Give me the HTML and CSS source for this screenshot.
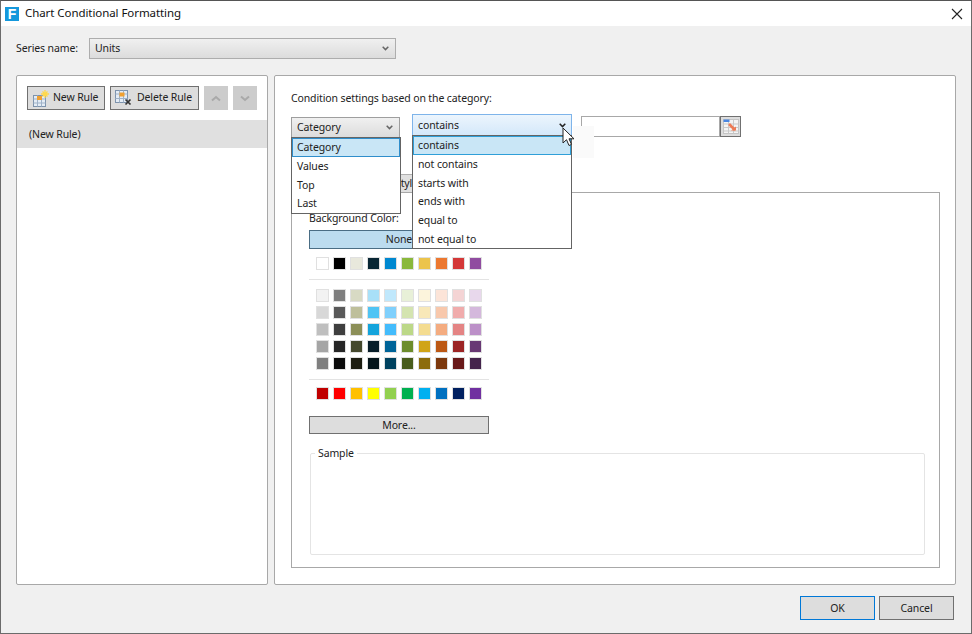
FILE: index.html
```html
<!DOCTYPE html>
<html lang="en">
<head>
<meta charset="utf-8">
<title>Chart Conditional Formatting</title>
<link rel="stylesheet" href="styles.css">
</head>
<body>
<div class="window">
  <header class="titlebar">
    <span class="app-logo">F</span>
    <span class="title">Chart Conditional Formatting</span>
    <svg class="close" width="12" height="12" viewBox="0 0 12 12"><path d="M1 1l10 10M11 1L1 11" stroke="#222" stroke-width="1.1" fill="none"/></svg>
  </header>
  <div class="series-row">
    <label class="series-label">Series name:</label>
    <div class="select series-select"><span>Units</span>
      <svg class="chev" width="7" height="5" viewBox="0 0 7 5"><path d="M0.700 0.800l2.800 2.800 2.800-2.800" stroke="#666" stroke-width="1.500" fill="none"/></svg>
    </div>
  </div>
  <main class="panels">
    <section class="panel rules">
      <div class="rule-toolbar">
        <button class="btn tool-btn">
          <svg width="19" height="20" viewBox="0 0 19 20"><rect x="2.500" y="7.500" width="12" height="11" fill="#e4ecf5" stroke="#7d93ad"/><path d="M2.500 11h12M2.500 15h12M6.500 7.500v11M10.500 7.500v11" stroke="#9fb2c8" fill="none"/><rect x="6" y="8" width="5" height="4" fill="#f0a030"/><path d="M14 2v8M10 6h8M11.500 3.500l5 5M16.500 3.500l-5 5" stroke="#ffd84a" stroke-width="1.300" fill="none"/></svg>
          <span>New Rule</span></button>
        <button class="btn tool-btn">
          <svg width="20" height="20" viewBox="0 0 20 20"><rect x="1.500" y="2.500" width="12" height="12" fill="#e4ecf5" stroke="#7d93ad"/><path d="M1.500 6h12M1.500 10.500h12M5.500 2.500v12M9.500 2.500v12" stroke="#9fb2c8" fill="none"/><rect x="5.500" y="4.500" width="5" height="4" fill="#f0a030"/><path d="M11.500 11.500l5 5M16.500 11.500l-5 5" stroke="#333" stroke-width="1.700" fill="none"/></svg>
          <span>Delete Rule</span></button>
        <button class="arrow-btn"><svg width="12" height="7" viewBox="0 0 12 7"><path d="M2 5.500l4-3.500 4 3.500" stroke="#a9a9a9" stroke-width="2" fill="none"/></svg></button>
        <button class="arrow-btn"><svg width="12" height="7" viewBox="0 0 12 7"><path d="M2 1.500l4 3.500 4-3.500" stroke="#a9a9a9" stroke-width="2" fill="none"/></svg></button>
      </div>
      <div class="rule-item">(New Rule)</div>
    </section>
    <section class="panel settings">
      <p class="cond-title">Condition settings based on the category:</p>
      <div class="cond-row">
        <div class="combo combo-first">
          <div class="select cat-select"><span>Category</span>
            <svg class="chev" width="7" height="5" viewBox="0 0 7 5"><path d="M0.700 0.800l2.800 2.800 2.800-2.800" stroke="#666" stroke-width="1.500" fill="none"/></svg>
          </div>
          <ul class="menu cat-menu">
            <li class="menu-item active">Category</li>
            <li class="menu-item">Values</li>
            <li class="menu-item">Top</li>
            <li class="menu-item">Last</li>
          </ul>
        </div>
        <div class="combo combo-second">
          <div class="select op-select"><span>contains</span>
            <svg class="chev" width="7" height="5" viewBox="0 0 7 5"><path d="M0.700 0.800l2.800 2.800 2.800-2.800" stroke="#222" stroke-width="1.500" fill="none"/></svg>
          </div>
          <ul class="menu op-menu">
            <li class="menu-item active">contains</li>
            <li class="menu-item">not contains</li>
            <li class="menu-item">starts with</li>
            <li class="menu-item">ends with</li>
            <li class="menu-item">equal to</li>
            <li class="menu-item">not equal to</li>
          </ul>
          <div class="cursor-shade"></div>
          <svg class="cursor" width="13" height="20" viewBox="0 0 13 20"><path d="M1 1v15l3.500-3.300 2.500 5.800 2.500-1.100-2.500-5.600h5z" fill="#fff" stroke="#222" stroke-width="1"/></svg>
        </div>
        <div class="value-field"><input class="value-input" type="text" aria-label="Value">
          <button class="pick-btn"><svg width="16" height="15" viewBox="0 0 16 15"><rect x="0.500" y="0.500" width="15" height="14" fill="#f4f4f4" stroke="#c4c4c4"/><path d="M0.500 5h15M0.500 8.500h15M0.500 12h15M5.500 0.500v14M10.500 0.500v14" stroke="#c9c9c9" fill="none"/><rect x="0.500" y="0.500" width="6" height="2.500" fill="#4a86e0"/><path d="M6 5l6 6" stroke="#ee7b55" stroke-width="2.600" fill="none"/><path d="M8 11.500h5v-4" fill="#ee7b55"/></svg></button>
        </div>
      </div>
      <div class="style-tab"><span class="tab-text">Style</span></div>
      <div class="style-box">
        <div class="bg-label">Background Color:</div>
        <button class="none-btn">None</button>
        <div class="palette" id="palette"></div>
        <button class="btn more-btn">More...</button>
        <fieldset class="sample"><legend class="sample-legend">Sample</legend></fieldset>
      </div>
    </section>
  </main>
  <footer class="actions">
    <button class="btn action-btn ok">OK</button>
    <button class="btn action-btn">Cancel</button>
  </footer>
</div>
<script src="palette.js"></script>
</body>
</html>
```

FILE: palette.js
```js
var groups = [
  [["#ffffff","#000000","#e8e8dc","#082634","#0088d0","#8ab83c","#ecc44c","#ec7830","#d43838","#904ca0"]],
  [["#f2f2f2","#7f7f7f","#d8dac4","#a8e0f8","#c0e8fc","#e8f0d8","#fcf4dc","#fce4d8","#f4d4d4","#e8d8ec"],
   ["#d8d8d8","#595959","#bebf9b","#50c4f4","#80d0fc","#d4e4b0","#f8e8b8","#f8c8ac","#f0acac","#d4b8dc"],
   ["#bfbfbf","#3f3f3f","#8c8f58","#14a4dc","#44bcfc","#bcd888","#f4dc90","#f4ac80","#e48484","#bc90c8"],
   ["#a5a5a5","#262626","#44482c","#061c28","#006498","#6c8c2c","#d0a418","#bc5814","#9c2424","#683874"],
   ["#7f7f7f","#0c0c0c","#1c1c10","#04141a","#00425f","#485c1c","#8c6c0c","#7c380c","#681818","#44244c"]],
  [["#c00000","#ff0000","#ffc000","#ffff00","#92d050","#00b050","#00b0f0","#0070c0","#002060","#7030a0"]]
];
var host = document.getElementById("palette");
groups.forEach(function (rows) {
  var g = document.createElement("div");
  g.className = "swatch-group";
  rows.forEach(function (row) {
    var r = document.createElement("div");
    r.className = "swatch-row";
    row.forEach(function (c) {
      var s = document.createElement("span");
      s.className = "swatch";
      s.style.backgroundColor = c;
      r.appendChild(s);
    });
    g.appendChild(r);
  });
  host.appendChild(g);
});
```

FILE: styles.css
```css
* { box-sizing: border-box; }
html, body { margin: 0; padding: 0; height: 100%; }
body {
  width: 972px;
  height: 634px;
  overflow: hidden;
  font-family: "Noto Sans", "Open Sans", sans-serif;
  font-size: 10.5px;
  letter-spacing: -0.12px;
  color: #222;
}
button { font: inherit; letter-spacing: inherit; color: inherit; padding: 0; cursor: default; }
ul { list-style: none; margin: 0; padding: 0; }
p { margin: 0; }

.window {
  width: 972px;
  height: 634px;
  background: #f0f0f0;
  border: 1px solid #6b6b6b;
  border-top-color: #555;
  display: flex;
  flex-direction: column;
}
.titlebar {
  height: 25px;
  background: #fff;
  display: flex;
  align-items: center;
  padding-left: 4px;
  flex: none;
}
.app-logo {
  width: 14px;
  height: 14px;
  background: #1498dc;
  color: #fff;
  font-family: "Liberation Sans", sans-serif;
  font-weight: 700;
  font-size: 14px;
  line-height: 14px;
  text-align: center;
  letter-spacing: 0;
}
.title { margin-left: 6px; margin-bottom: 2px; font-size: 11.5px; letter-spacing: -0.07px; color: #111; }
.close { margin-left: auto; margin-right: 8px; }

.series-row {
  height: 49px;
  padding: 12px 0 0 15px;
  display: flex;
  align-items: flex-start;
  flex: none;
}
.series-label { line-height: 20px; width: 73px; }
.select {
  display: flex;
  align-items: center;
  justify-content: space-between;
  background: linear-gradient(#f0f0f0, #dcdcdc);
  border: 1px solid #adadad;
}
.series-select span, .cat-select span { position: relative; top: -1px; }
.series-select { width: 307px; height: 21px; padding: 0 6px 0 5px; }

.panels {
  flex: none;
  height: 510px;
  display: flex;
  gap: 6px;
  padding-left: 15px;
}
.panel {
  background: #fff;
  border: 1px solid #a8a8a8;
  border-radius: 2px;
}
.rules { width: 252px; }
.settings { width: 682px; padding: 15px 16px 0; }

.rule-toolbar {
  display: flex;
  height: 44px;
  padding: 10px 0 0 10px;
}
.btn {
  background: #dddddd;
  border: 1px solid #707070;
}
.tool-btn {
  height: 24px;
  display: flex;
  align-items: center;
  gap: 3px;
  padding: 0 3px;
  margin-right: 5px;
  white-space: nowrap;
}
.tool-btn span { position: relative; top: -1px; }
.tool-btn:first-child { width: 78px; }
.tool-btn:nth-child(2) { width: 89px; }
.arrow-btn {
  width: 24px;
  height: 24px;
  margin-right: 5px;
  background: #cccccc;
  border: none;
  display: flex;
  align-items: center;
  justify-content: center;
}
.rule-item {
  height: 28px;
  line-height: 28px;
  background: #e0e0e0;
  padding-left: 12px;
}

.cond-title { line-height: 15px; height: 15px; }
.cond-row { display: flex; height: 60px; margin-top: 8px; align-items: flex-start; }
.combo { position: relative; }
.combo-first { width: 109px; margin-top: 3px; margin-right: 12px; }
.combo-second { width: 160px; margin-right: 9px; }
.cat-select { height: 21px; padding: 0 6px 0 5px; border-color: #9e9e9e; }
.op-select {
  height: 22px;
  padding: 0 5px;
  background: linear-gradient(#ecf5fd, #d4e8fa);
  border-color: #7eb4ea;
}
.menu {
  position: absolute;
  z-index: 5;
  background: #fff;
  border: 1px solid #646464;
  padding: 0;
}
.cat-menu { top: 20px; left: 0; width: 110px; height: 77px; }
.op-menu { top: 21px; left: 0; width: 160px; height: 114px; }
.menu-item { height: 18.700px; line-height: 18px; padding-left: 5px; }
.menu-item.active {
  background: #c9e6f6;
  border: 1px solid #2f8ecb;
  padding-left: 4px;
  height: 19px;
  line-height: 17px;
}
.op-menu .menu-item.active { border-color: #2f9fd8; }
.cursor {
  position: absolute;
  z-index: 7;
  left: 150px;
  top: 13px;
}
.cursor-shade {
  position: absolute;
  z-index: 6;
  left: 161px;
  top: 12px;
  width: 21px;
  height: 32px;
  background: #fafafa;
}
.value-field { display: flex; margin-top: 2px; }
.value-input {
  width: 139px;
  height: 21px;
  border: 1px solid #a8a8a8;
  background: #fff;
  padding: 0;
  outline: none;
}
.pick-btn {
  width: 21px;
  height: 21px;
  background: #dddddd;
  border: 1px solid #707070;
  display: flex;
  align-items: center;
  justify-content: center;
}

.style-tab {
  height: 18px;
  margin-left: 74px;
  width: 58px;
  background: #e0e0e0;
  border: 1px solid #b0b0b0;
  border-bottom: none;
  text-align: right;
  padding-right: 4px;
  line-height: 17px;
  color: #222;
}
.style-box {
  height: 376px;
  width: 649px;
  border: 1px solid #a8a8a8;
  padding: 14px 14px 0 17px;
}
.bg-label { line-height: 20px; height: 22px; margin-top: 1px; }
.none-btn {
  display: block;
  width: 180px;
  height: 19px;
  background: #bcdcef;
  border: 1px solid #4a6d84;
  text-align: center;
  line-height: 17px;
}
.palette { width: 180px; }
.swatch-group {
  padding: 8px 0 9px;
  border-bottom: 1px solid #e3e3e3;
}
.swatch-group:nth-child(2) { padding-top: 9px; padding-bottom: 9px; }
.swatch-group:last-child { border-bottom: none; padding: 7px 0 0; }
.swatch-row {
  display: flex;
  gap: 4px;
  padding-left: 7px;
  height: 13px;
  margin-bottom: 4px;
}
.swatch-row:last-child { margin-bottom: 0; }
.swatch {
  width: 13px;
  height: 13px;
  border: 1px solid #e0e0e0;
  flex: none;
}
.more-btn {
  display: block;
  width: 180px;
  height: 18px;
  margin-top: 16px;
  text-align: center;
  line-height: 16px;
}
.sample {
  margin: 12px 0 0 1px;
  padding: 0;
  width: 615px;
  height: 109px;
  border: 1px solid #e4e4e4;
  border-radius: 2px;
}
.sample-legend { padding: 0 3px; margin-left: 4px; }

.actions {
  flex: 1;
  display: flex;
  justify-content: flex-end;
  gap: 4px;
  padding: 11px 17px 0 0;
}
.action-btn { width: 75px; height: 24px; line-height: 22px; text-align: center; }
.action-btn.ok { border: 1px solid #0078d7; }
```
